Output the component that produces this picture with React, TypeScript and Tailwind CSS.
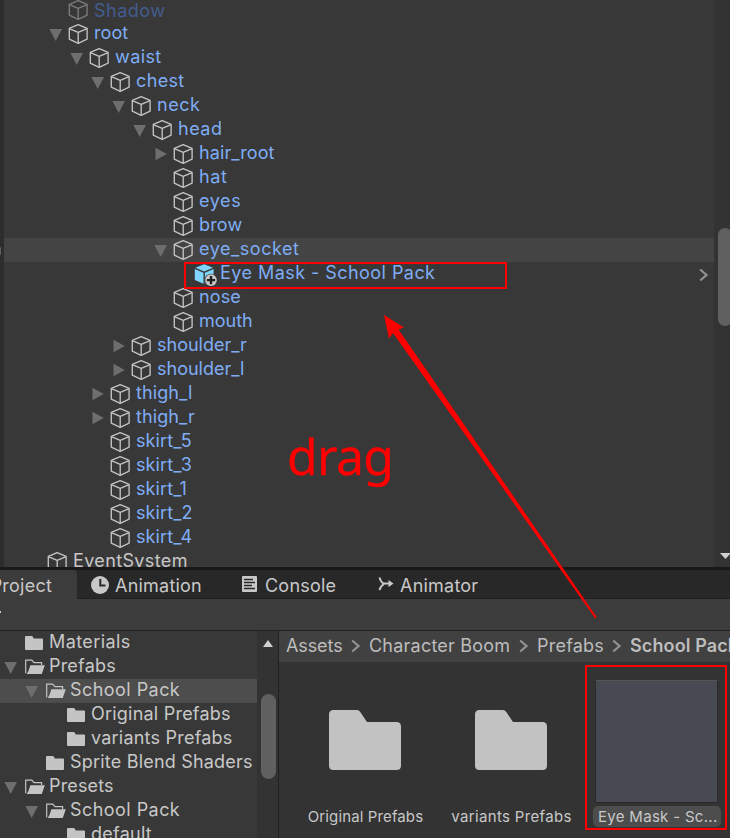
import React from "react";

type Arrow = "down" | "right" | null;

interface Node {
  name: string;
  level: number;
  arrow: Arrow;
  kind?: "dim" | "prefab" | "scene";
  tracking: string;
}

const hierarchy: Node[] = [
  { name: "Shadow", level: 1, arrow: null, kind: "dim", tracking: "tracking-[0.5px]" },
  { name: "root", level: 1, arrow: "down", tracking: "tracking-[0.1px]" },
  { name: "waist", level: 2, arrow: "down", tracking: "tracking-[0.4px]" },
  { name: "chest", level: 3, arrow: "down", tracking: "tracking-[0.35px]" },
  { name: "neck", level: 4, arrow: "down", tracking: "tracking-[0.5px]" },
  { name: "head", level: 5, arrow: "down", tracking: "tracking-[0.5px]" },
  { name: "hair_root", level: 6, arrow: "right", tracking: "tracking-[0.1px]" },
  { name: "hat", level: 6, arrow: null, tracking: "tracking-[0.6px]" },
  { name: "eyes", level: 6, arrow: null, tracking: "tracking-[0.6px]" },
  { name: "brow", level: 6, arrow: null, tracking: "tracking-[0.15px]" },
  { name: "eye_socket", level: 6, arrow: "down", tracking: "tracking-[0.55px]" },
  { name: "Eye Mask - School Pack", level: 7, arrow: null, kind: "prefab", tracking: "tracking-[0.45px]" },
  { name: "nose", level: 6, arrow: null, tracking: "tracking-[0.1px]" },
  { name: "mouth", level: 6, arrow: null, tracking: "tracking-[0px]" },
  { name: "shoulder_r", level: 4, arrow: "right", tracking: "tracking-[0px]" },
  { name: "shoulder_l", level: 4, arrow: "right", tracking: "tracking-[0px]" },
  { name: "thigh_l", level: 3, arrow: "right", tracking: "tracking-[0.1px]" },
  { name: "thigh_r", level: 3, arrow: "right", tracking: "tracking-[0.1px]" },
  { name: "skirt_5", level: 3, arrow: null, tracking: "tracking-[0.1px]" },
  { name: "skirt_3", level: 3, arrow: null, tracking: "tracking-[0.1px]" },
  { name: "skirt_1", level: 3, arrow: null, tracking: "tracking-[0.1px]" },
  { name: "skirt_2", level: 3, arrow: null, tracking: "tracking-[0.1px]" },
  { name: "skirt_4", level: 3, arrow: null, tracking: "tracking-[0.1px]" },
  { name: "EventSystem", level: 0, arrow: null, kind: "scene", tracking: "tracking-[0.37px]" },
];

const folders: { name: string; level: number; open: boolean; tracking: string }[] = [
  { name: "Materials", level: 0, open: false, tracking: "tracking-[0.42px]" },
  { name: "Prefabs", level: 0, open: true, tracking: "tracking-[0.2px]" },
  { name: "School Pack", level: 1, open: true, tracking: "tracking-[0.45px]" },
  { name: "Original Prefabs", level: 2, open: false, tracking: "tracking-[0.22px]" },
  { name: "variants Prefabs", level: 2, open: false, tracking: "tracking-[0.22px]" },
  { name: "Sprite Blend Shaders", level: 1, open: false, tracking: "tracking-[0.2px]" },
  { name: "Presets", level: 0, open: true, tracking: "tracking-[0.15px]" },
  { name: "School Pack", level: 1, open: true, tracking: "tracking-[0.45px]" },
  { name: "default", level: 2, open: false, tracking: "tracking-[0.25px]" },
];

function Foldout({ dir }: { dir: Arrow }) {
  return (
    <svg className="h-6 w-4 shrink-0" viewBox="0 0 16 24">
      {dir === "down" && <path d="M1.4 7H14L7.7 18.9Z" fill="#6e6e6e" />}
      {dir === "right" && <path d="M2.5 5.7V18.3L13.8 12Z" fill="#6e6e6e" />}
    </svg>
  );
}

function Cube({ dim }: { dim?: boolean }) {
  return (
    <svg
      className="h-6 w-5 shrink-0"
      viewBox="0 0 20 24"
      fill="none"
      stroke={dim ? "#7b7b7b" : "#c4c4c4"}
      strokeWidth="1.35"
      strokeLinejoin="round"
    >
      <path d="M10.2 2.6 19.1 6.4V17.2L10.2 21.3 1.3 17.2V6.4Z" />
      <path d="M1.3 6.6 10.2 10.4 19.1 6.6M10.2 10.4V21.3" />
    </svg>
  );
}

function PrefabCube() {
  return (
    <svg className="-mr-1 h-6 w-6 shrink-0" viewBox="0 0 24 24">
      <path d="M10.2 2.2 19 5.7 10.2 9.4 1.4 5.7Z" fill="#7fd6fd" />
      <path d="M.8 7 9.5 10.7V21.7L.8 18Z" fill="#7fd6fd" />
      <path d="M10.9 10.7 19.6 7V18L10.9 21.7Z" fill="#7fd6fd" />
      <circle cx="17" cy="18.1" r="6.4" fill="#383838" />
      <circle cx="17" cy="18.1" r="5.8" fill="#c8c8c8" />
      <path d="M17 14V22.2M12.9 18.1H21.1" stroke="#202020" strokeWidth="2.4" />
    </svg>
  );
}

function TreeFolder({ open }: { open: boolean }) {
  return (
    <svg className="h-6 w-5 shrink-0" viewBox="0 0 20 24">
      {open ? (
        <>
          <path
            d="M.7 18.3V5.2H6.8L9 7.7H16.6V10"
            fill="none"
            stroke="#c4c4c4"
            strokeWidth="1.2"
          />
          <path d="M5.3 10.2H19.8L16.8 19H1.6Q3.7 16.5 5.3 10.2Z" fill="#c4c4c4" />
        </>
      ) : (
        <path
          d="M0 6Q0 5 1 5H6.7Q7.4 5 7.8 5.7L8.8 7.6H17Q18 7.6 18 8.6V18Q18 19 17 19H1Q0 19 0 18Z"
          fill="#c4c4c4"
        />
      )}
    </svg>
  );
}

function Chevron({ className }: { className: string }) {
  return (
    <svg className={className} viewBox="0 0 10 14" fill="none">
      <path d="M1.2 1.5 7.5 7 1.2 12.5" stroke="#929292" strokeWidth="2.3" />
    </svg>
  );
}

function HierarchyRow({ node }: { node: Node }) {
  const color =
    node.kind === "dim"
      ? "text-[#425c90]"
      : node.kind === "scene"
        ? "text-[#c8c8c8]"
        : "text-[#7fadf5]";
  return (
    <div
      className={`flex h-6 shrink-0 items-center ${node.name === "eye_socket" ? "bg-[#444444]" : ""}`}
      style={{ paddingLeft: 23 + node.level * 21 }}
    >
      <Foldout dir={node.arrow} />
      <span className="ml-1 flex">
        {node.kind === "prefab" ? <PrefabCube /> : <Cube dim={node.kind === "dim"} />}
      </span>
      <span
        className={`ml-[6px] whitespace-nowrap ${node.kind === "dim" ? "mt-[1px]" : "-mt-[3px]"} ${node.tracking} ${color}`}
      >
        {node.name}
      </span>
      {node.kind === "prefab" && <Chevron className="ml-auto mr-[5px] mt-[1px] h-[14px] w-[10px]" />}
    </div>
  );
}

function BigFolder({ name, tracking }: { name: string; tracking: string }) {
  return (
    <div className="flex w-[146px] shrink-0 flex-col items-center">
      <svg className="mt-[48px] h-[60px] w-[72px]" viewBox="0 0 72 60">
        <path
          d="M0 4.500Q0 0 4.500 0H28Q30 0 31.300 2L38 12H67.500Q72 12 72 16.500V55.500Q72 60 67.500 60H4.500Q0 60 0 55.500Z"
          fill="#c2c2c2"
        />
      </svg>
      <span
        className={`ml-[1px] mt-[36px] whitespace-nowrap text-[15px] leading-[22px] ${tracking}`}
      >
        {name}
      </span>
    </div>
  );
}

export default function App() {
  return (
    <div className="relative flex h-[838px] w-[730px] flex-col overflow-hidden bg-[#383838] font-['Inter',sans-serif] text-[18px] leading-6 tracking-[0.22px] text-[#c8c8c8]">
      <section className="flex h-[567px] shrink-0 overflow-hidden">
        <div className="h-full w-1 shrink-0 bg-[#2d2d2d]">
          <div className="mt-[247px] h-[8px] w-[1px] rounded-r bg-[#606060]" />
        </div>
        <div className="-mt-[2px] flex min-w-0 flex-1 flex-col">
          {hierarchy.map((n) => (
            <HierarchyRow key={n.name} node={n} />
          ))}
        </div>
        <div className="flex h-full w-4 shrink-0 flex-col overflow-hidden bg-[#333333] pl-1">
          <div className="mt-[228px] h-[98px] w-[14px] shrink-0 rounded-[7px] bg-[#606060]" />
          <svg className="ml-[2px] mt-[227px] h-[7px] w-[11px] shrink-0" viewBox="0 0 11 7">
            <path d="M0 0H11L5.500 6Z" fill="#d0d0d0" />
          </svg>
        </div>
      </section>

      <nav className="flex h-8 shrink-0 border-t-[3px] border-[#191919] bg-[#282828]">
        <div className="flex w-[77px] shrink-0 items-center justify-end overflow-hidden rounded-tr-[4px] bg-[#3c3c3c] pr-[25px]">
          <span className="mt-[3px]">Project</span>
        </div>
        <div className="flex w-[165px] shrink-0 items-center border-b border-[#202020] pl-[14px]">
          <svg className="mt-[1px] h-[18px] w-[18px]" viewBox="0 0 18 18">
            <circle cx="9" cy="9" r="9" fill="#c8c8c8" />
            <path d="M9.300 3V9.500H14.500" fill="none" stroke="#282828" strokeWidth="2" />
          </svg>
          <span className="ml-[6px] mt-[3px]">Animation</span>
        </div>
        <div className="flex w-[136px] shrink-0 items-center border-b border-[#202020]">
          <svg className="h-[16px] w-[15px]" viewBox="0 0 15 16">
            <rect width="15" height="16" rx="1" fill="#c8c8c8" />
            <path
              d="M2 3.500H11M2 6.500H13M2 9.500H10M2 12.500H13"
              stroke="#282828"
              strokeWidth="1.400"
            />
          </svg>
          <span className="ml-[8px] mt-[3px]">Console</span>
        </div>
        <div className="flex flex-1 items-center border-b border-[#202020]">
          <svg className="h-4 w-4" viewBox="0 0 16 16" fill="none">
            <path
              d="M1.500 1.500Q3 6.800 6 7.500H11M1.500 14Q2.500 10 6 8"
              stroke="#c8c8c8"
              strokeWidth="2"
            />
            <path d="M10.500 4 15.500 7.600 10.500 11.200Z" fill="#c8c8c8" />
          </svg>
          <span className="ml-[6px] mt-[3px]">Animator</span>
        </div>
      </nav>

      <div className="h-8 shrink-0 border-b border-[#222] bg-[#3c3c3c]">
        <div className="mt-[12px] h-[2px] w-[1px] bg-[#ccc]" />
      </div>

      <section className="flex min-h-0 flex-1">
        <div className="flex w-[257px] shrink-0 flex-col overflow-hidden">
          {folders.map((f, i) => (
            <div
              key={i}
              className={`flex h-6 shrink-0 items-center ${i === 2 ? "bg-[#4d4d4d]" : ""}`}
              style={{ paddingLeft: 3 + f.level * 21 }}
            >
              <Foldout dir={f.open ? "down" : null} />
              <span className="ml-[6px] flex">
                <TreeFolder open={f.open} />
              </span>
              <span className={`ml-[4px] -mt-[3px] whitespace-nowrap ${f.tracking}`}>{f.name}</span>
            </div>
          ))}
        </div>
        <div className="flex w-[22px] shrink-0 flex-col border-r border-[#202020] bg-[#333333]">
          <svg className="ml-[6px] mt-[9px] h-[7px] w-[10px]" viewBox="0 0 10 7">
            <path d="M0 7H10L5 0Z" fill="#d0d0d0" />
          </svg>
          <div className="ml-[4px] mt-[47px] h-[85px] w-[15px] rounded-full bg-[#606060]" />
        </div>
        <div className="flex min-w-0 flex-1 flex-col overflow-hidden bg-[#333333]">
          <div className="flex h-[31px] shrink-0 items-center overflow-hidden whitespace-nowrap bg-[#414141] pb-[2px] pl-[7px] text-[#bdbdbd]">
            <span className="w-[65px] shrink-0 tracking-[-0.1px]">Assets</span>
            <Chevron className="h-[14px] w-[10px] shrink-0" />
            <span className="ml-[8px] w-[150px] shrink-0">Character Boom</span>
            <Chevron className="h-[14px] w-[10px] shrink-0" />
            <span className="ml-[8px] w-[75px] shrink-0">Prefabs</span>
            <Chevron className="h-[14px] w-[10px] shrink-0" />
            <span className="ml-[8px] font-semibold tracking-[0.12px]">School Pack</span>
          </div>
          <div className="flex pl-[13px]">
            <BigFolder name="Original Prefabs" tracking="tracking-[0.12px]" />
            <BigFolder name="variants Prefabs" tracking="tracking-[0.33px]" />
            <div className="ml-[1px] mt-[3px] flex h-[165px] w-[142px] shrink-0 flex-col items-center border-2 border-[#ff0000] pl-[2px]">
              <div className="mr-[1px] mt-[13px] h-[123px] w-[123px] shrink-0 border border-x-[#292929] border-b-[#292929] border-t-[#555] bg-[#474a52]" />
              <div className="mt-[3px] h-[21px] w-[128px] shrink-0 overflow-hidden whitespace-nowrap rounded-[5px] bg-[#4d4d4d] pl-[5px] text-[15px] leading-[22px] tracking-[0.3px]">
                Eye Mask - Sc...
              </div>
            </div>
          </div>
        </div>
      </section>

      <div className="absolute left-[184px] top-[262px] h-[27px] w-[323px] border-2 border-[#ff0000]" />
      <div className="absolute left-[287px] top-[424px] font-['Noto_Sans',sans-serif] text-[50px] leading-[64px] tracking-[-0.7px] text-[#ff0000] [-webkit-text-stroke:0.3px_#ff0000]">
        drag
      </div>
      <svg className="absolute left-0 top-0 h-[838px] w-[730px]" viewBox="0 0 730 838">
        <path
          d="M384 315 404 327.500 398.500 329.500 596.800 617.200 595.300 618.500 393 333 389 338.500Z"
          fill="#ff0000"
        />
      </svg>
    </div>
  );
}
